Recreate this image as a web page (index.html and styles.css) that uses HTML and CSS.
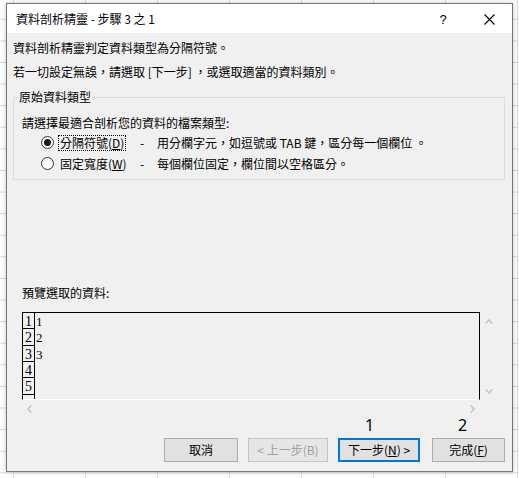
FILE: index.html
```html
<!DOCTYPE html>
<html lang="zh-Hant">
<head>
<meta charset="utf-8">
<title>資料剖析精靈</title>
<link rel="stylesheet" href="styles.css">
</head>
<body>
<div class="dialog">
  <div class="titlebar">
    <span class="title">資料剖析精靈 - 步驟 3 之 1</span>
    <span class="tb-btn help">?</span>
    <span class="tb-btn close">
      <svg width="11" height="11" viewBox="0 0 11 11"><path d="M0.5 0.5 L10.5 10.5 M10.5 0.5 L0.5 10.5" stroke="#000" stroke-width="1.1" fill="none"/></svg>
    </span>
  </div>
  <div class="body">
    <div class="line">資料剖析精靈判定資料類型為分隔符號。</div>
    <div class="line">若一切設定無誤，請選取 [下一步] ，或選取適當的資料類別。</div>
    <fieldset class="group">
      <legend>原始資料類型</legend>
      <div class="group-inner">
        <div class="instr">請選擇最適合剖析您的資料的檔案類型:</div>
        <div class="radio-row">
          <span class="radio on"></span>
          <span class="lbl"><span class="focus">分隔符號(<u>D</u>)</span></span>
          <span class="dash">-</span>
          <span class="desc">用分欄字元，如逗號或 TAB 鍵，區分每一個欄位 。</span>
        </div>
        <div class="radio-row">
          <span class="radio"></span>
          <span class="lbl"><span class="nofocus">固定寬度(<u>W</u>)</span></span>
          <span class="dash">-</span>
          <span class="desc">每個欄位固定，欄位間以空格區分。</span>
        </div>
      </div>
    </fieldset>
    <div class="pv-label">預覽選取的資料:</div>
    <div class="preview">
      <div class="pv-box">
        <div class="pv-row"><span class="pv-num">1</span><span class="pv-data">1</span></div>
        <div class="pv-row"><span class="pv-num">2</span><span class="pv-data">2</span></div>
        <div class="pv-row"><span class="pv-num">3</span><span class="pv-data">3</span></div>
        <div class="pv-row"><span class="pv-num">4</span><span class="pv-data"></span></div>
        <div class="pv-row"><span class="pv-num">5</span><span class="pv-data"></span></div>
        <div class="pv-row"><span class="pv-num"></span><span class="pv-data"></span></div>
      </div>
      <div class="vscroll">
        <svg width="8" height="5" viewBox="0 0 8 5"><polyline points="0.6,4.4 4,1 7.4,4.4" fill="none" stroke="#c2c2c2" stroke-width="1.4"/></svg>
        <svg width="8" height="5" viewBox="0 0 8 5"><polyline points="0.6,0.6 4,4 7.4,0.6" fill="none" stroke="#c2c2c2" stroke-width="1.4"/></svg>
      </div>
      <div class="hscroll">
        <svg width="5" height="8" viewBox="0 0 5 8"><polyline points="4.4,0.6 1,4 4.4,7.4" fill="none" stroke="#c2c2c2" stroke-width="1.4"/></svg>
        <svg width="5" height="8" viewBox="0 0 5 8"><polyline points="0.6,0.6 4,4 0.6,7.4" fill="none" stroke="#c2c2c2" stroke-width="1.4"/></svg>
      </div>
    </div>
    <div class="marks">
      <span class="mark m1">1</span>
      <span class="mark m2">2</span>
    </div>
    <div class="buttons">
      <button class="btn b-cancel">取消</button>
      <button class="btn b-back" disabled>&lt; 上一步(B)</button>
      <button class="btn b-next">下一步(<u>N</u>) &gt;</button>
      <button class="btn b-finish">完成(<u>F</u>)</button>
    </div>
  </div>
</div>
</body>
</html>
```
FILE: styles.css
```css
html, body {
  margin: 0;
  padding: 0;
}
body {
  width: 519px;
  height: 478px;
  overflow: hidden;
  position: relative;
  background-color: #ffffff;
  background-image:
    linear-gradient(to right, #d9d9d9 1px, transparent 1px),
    linear-gradient(to bottom, #d9d9d9 1px, transparent 1px);
  background-size: 72px 21.6px;
  background-position: 13px 18.8px;
  font-family: "Noto Sans CJK TC", "Noto Sans", sans-serif;
  font-size: 12px;
  color: #000;
}
.dialog {
  position: absolute;
  left: 6px;
  top: 3px;
  width: 507px;
  box-sizing: border-box;
  border: 1px solid #757575;
  background: #f0f0f0;
  box-shadow: 0 0 5px rgba(0, 0, 0, 0.22);
}
.titlebar {
  height: 29px;
  background: #ffffff;
  display: flex;
  align-items: center;
}
.title {
  flex: 1;
  padding-left: 9px;
  line-height: 29px;
  font-size: 12px;
}
.tb-btn {
  width: 46px;
  height: 29px;
  display: flex;
  align-items: center;
  justify-content: center;
}
.help {
  font-family: "Liberation Sans", sans-serif;
  font-size: 13px;
  padding-top: 1px;
  box-sizing: border-box;
}
.close {
  padding-top: 1px;
  box-sizing: border-box;
}
.body {
  padding: 3px 7px 9px 6px;
}
.line {
  line-height: 24px;
  height: 24px;
  white-space: nowrap;
}
.group {
  margin: 5px 0 0 0;
  padding: 0 0 5px 4px;
  border: 1px solid #dcdcdc;
  min-width: 0;
}
.group legend {
  padding: 0 1px;
  line-height: 16px;
  height: 16px;
}
.group-inner {
  padding-left: 4px;
  padding-top: 8px;
}
.instr {
  height: 19px;
  line-height: 19px;
  white-space: nowrap;
}
.radio-row {
  height: 21px;
  display: flex;
  align-items: center;
  padding-left: 19px;
  white-space: nowrap;
}
.radio {
  width: 13px;
  height: 13px;
  box-sizing: border-box;
  border: 1px solid #333;
  border-radius: 50%;
  background: #fff;
  display: flex;
  align-items: center;
  justify-content: center;
  flex: none;
}
.radio.on::after {
  content: "";
  width: 7px;
  height: 7px;
  border-radius: 50%;
  background: #1a1a1a;
}
.lbl {
  width: 82px;
  margin-left: 4px;
  flex: none;
  display: flex;
}
.focus, .nofocus {
  line-height: 14px;
  padding: 0 1px;
  border: 1px dotted #000;
}
.nofocus {
  border-color: transparent;
}
.dash {
  width: 17px;
  flex: none;
}
.desc {
  flex: none;
}
.pv-label {
  margin-top: 103px;
  padding-left: 9px;
  height: 20px;
  line-height: 20px;
}
.preview {
  margin-top: 9px;
  margin-left: 9px;
  display: grid;
  grid-template-columns: 458px 17px;
  grid-template-rows: 88px 16px;
}
.pv-box {
  box-sizing: border-box;
  border: 1px solid #000;
  border-bottom: 1px solid #fff;
  overflow: hidden;
}
.pv-row {
  display: flex;
  height: 16.33px;
}
.pv-num {
  width: 12px;
  box-sizing: border-box;
  flex: none;
  border-right: 1px solid #000;
  border-bottom: 1px solid #000;
  font-family: "Liberation Serif", serif;
  font-size: 14px;
  line-height: 17px;
  padding-left: 2px;
  overflow: hidden;
}
.pv-data {
  font-family: "Liberation Serif", serif;
  font-size: 13px;
  line-height: 13px;
  padding-left: 1px;
  padding-top: 2px;
}
.vscroll {
  display: flex;
  flex-direction: column;
  justify-content: space-between;
  align-items: center;
  padding: 7px 0 6px 0;
}
.hscroll {
  display: flex;
  align-items: center;
  justify-content: space-between;
  padding: 1px 5px 0 5px;
}
.marks {
  height: 18px;
  display: flex;
  justify-content: flex-end;
  gap: 12px;
  font-family: "Noto Sans", "Liberation Sans", sans-serif;
  font-size: 16px;
  line-height: 18px;
}
.mark {
  box-sizing: border-box;
}
.m1 {
  width: 82px;
  padding-left: 27px;
}
.m2 {
  width: 73px;
  padding-left: 26px;
}
.buttons {
  margin-top: 4px;
  display: flex;
  justify-content: flex-end;
  gap: 10px;
}
.btn {
  height: 24px;
  box-sizing: border-box;
  border: 1px solid #adadad;
  background: #e1e1e1;
  font-family: "Noto Sans CJK TC", "Noto Sans", sans-serif;
  font-size: 12px;
  line-height: 20px;
  color: #000;
  padding: 0;
  margin: 0;
  border-radius: 0;
}
.b-cancel {
  width: 74px;
}
.b-back {
  width: 80px;
  color: #a0a0a0;
  border-color: #c6c6c6;
  background: #e6e6e6;
}
.b-next {
  width: 82px;
  border: 2px solid #0078d7;
}
.b-finish {
  width: 73px;
  margin-left: 2px;
}
```
